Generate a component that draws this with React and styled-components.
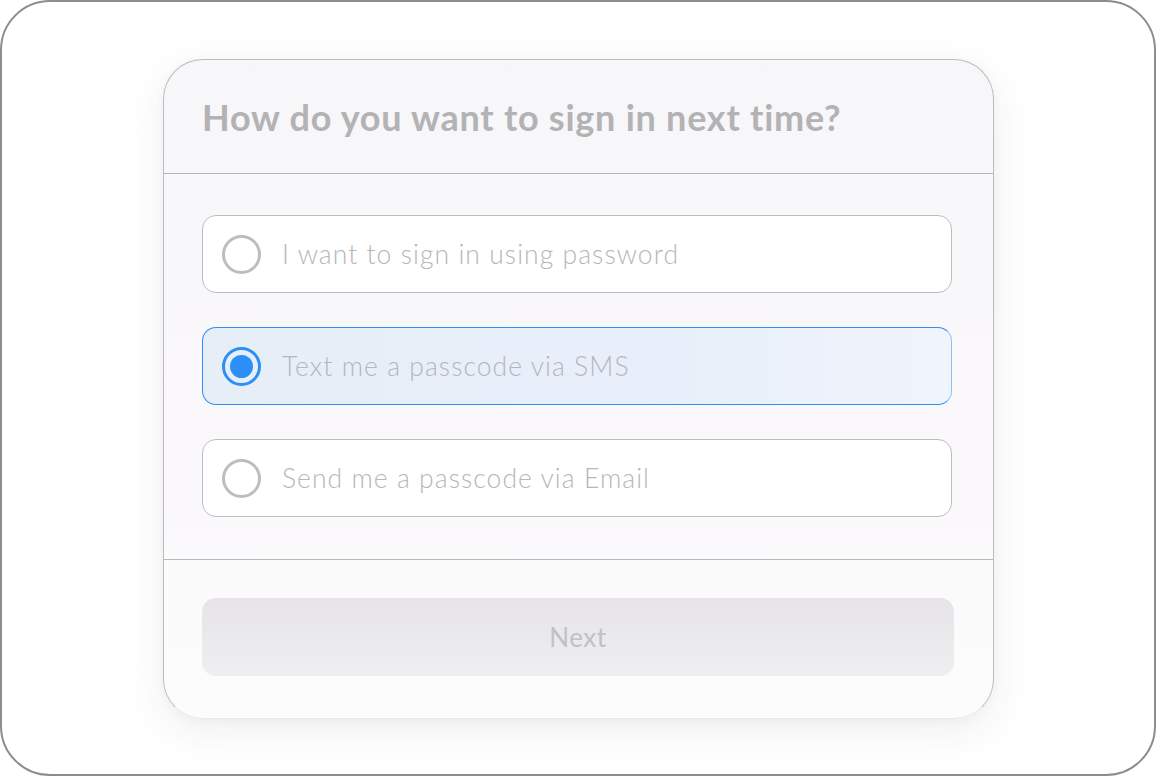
import React, { useState } from "react";
import styled, { createGlobalStyle } from "styled-components";

const Global = createGlobalStyle`
  html, body { margin: 0; padding: 0; background: #ffffff; }
  * { box-sizing: border-box; }
  body { font-family: Lato, "Noto Sans", sans-serif; }
`;

const Frame = styled.div`
  width: 1156px;
  height: 776px;
  border: 2px solid #8d8d8f;
  border-radius: 50px;
  background: #ffffff;
  padding: 57px 0 0 161px;
`;

const Card = styled.div`
  width: 831px;
  height: 660px;
  border: 1.5px solid #bcbbbe;
  border-bottom-color: #e9e8ec;
  border-radius: 40px;
  background: linear-gradient(180deg, #f7f6f8 0%, #faf8fa 60%, #fdfcfd 100%);
  box-shadow: 0 12px 40px rgba(60, 50, 70, 0.08), 0 2px 10px rgba(60, 50, 70, 0.04);
  display: flex;
  flex-direction: column;
  overflow: hidden;
`;

const Header = styled.div`
  height: 114px;
  padding: 0 38px;
  display: flex;
  align-items: center;
  border-bottom: 1.5px solid #b6b5b8;
`;

const Title = styled.h1`
  margin: 0;
  font-family: Lato, "Noto Sans", sans-serif;
  font-size: 36px;
  font-weight: 700;
  color: #b3b2b5;
  letter-spacing: 0.75px;
`;

const Body = styled.div`
  padding: 41px 38px 42px;
  display: flex;
  flex-direction: column;
  gap: 34px;
  border-bottom: 1.5px solid #b8b7ba;
`;

const Option = styled.div`
  height: 78px;
  width: 750px;
  border-radius: 14px;
  border: 1.5px solid ${(p) => (p.$selected ? "#2b8ff7" : "#bdbcbf")};
  border-right-color: ${(p) => (p.$selected ? "#8cc0f8" : "#bdbcbf")};
  background: ${(p) =>
    p.$selected
      ? "linear-gradient(90deg, #e6eef8 0%, #e8effa 60%, #f0f4fc 100%)"
      : "#ffffff"};
  display: flex;
  align-items: center;
  padding-left: 19px;
  gap: 21px;
  cursor: pointer;
`;

const Radio = styled.span`
  width: 39px;
  height: 39px;
  border-radius: 50%;
  border: 3px solid ${(p) => (p.$selected ? "#2b8ff7" : "#bdbdbf")};
  display: flex;
  align-items: center;
  justify-content: center;
  flex-shrink: 0;
`;

const Dot = styled.span`
  width: 23px;
  height: 23px;
  border-radius: 50%;
  background: #2b8ff7;
`;

const Label = styled.span`
  font-family: Lato, "Noto Sans", sans-serif;
  font-size: 26.5px;
  font-weight: 300;
  color: #b7b6b9;
  letter-spacing: 1.05px;
`;

const Footer = styled.div`
  flex: 1;
  padding: 38px 38px 0;
`;

const NextButton = styled.button`
  width: 752px;
  height: 78px;
  border: none;
  border-radius: 14px;
  background: linear-gradient(180deg, #e6e4e7 0%, #efeef0 100%);
  font-family: Lato, "Noto Sans", sans-serif;
  font-size: 26px;
  font-weight: 400;
  letter-spacing: 0.5px;
  color: #c2c1c4;
  cursor: default;
`;

const options = [
  "I want to sign in using password",
  "Text me a passcode via SMS",
  "Send me a passcode via Email",
];

export default function App() {
  const [sel, setSel] = useState(1);
  return (
    <>
      <Global />
      <Frame>
        <Card>
          <Header>
            <Title>How do you want to sign in next time?</Title>
          </Header>
          <Body>
            {options.map((o, i) => (
              <Option key={o} $selected={sel === i} onClick={() => setSel(i)}>
                <Radio $selected={sel === i}>{sel === i && <Dot />}</Radio>
                <Label>{o}</Label>
              </Option>
            ))}
          </Body>
          <Footer>
            <NextButton>Next</NextButton>
          </Footer>
        </Card>
      </Frame>
    </>
  );
}
